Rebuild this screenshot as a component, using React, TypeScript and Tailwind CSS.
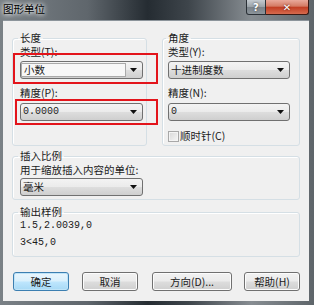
import React from "react";

const comboBg =
    "bg-[linear-gradient(#f3f3f3,#ebebeb_48%,#dddddd_52%,#cfcfcf)]";

function Arrow() {
    return (
        <svg className="ml-auto mr-[5px] shrink-0" width="7" height="4" viewBox="0 0 7 4">
            <path d="M0 0h7L3.5 4z" fill="#111" />
        </svg>
    );
}

interface ComboProps {
    value: string;
    width: string;
    mono?: boolean;
    focused?: boolean;
}

function Combo({ value, width, mono, focused }: ComboProps) {
    return (
        <div className={`${width} ${comboBg} h-[18px] rounded-[3px] border border-[#707070] flex items-center`}>
            {focused ? (
                <span className="h-[14px] w-[105px] border border-[#a9a9a9] bg-[#f7f7f7] flex items-center pl-[2px] leading-none">
                    {value}
                </span>
            ) : (
                <span className={`pl-[2px] leading-none ${mono ? "font-['Liberation_Mono',monospace] text-[10px]" : ""}`}>
                    {value}
                </span>
            )}
            <Arrow />
        </div>
    );
}

function Button({ label, width, primary }: { label: string; width: string; primary?: boolean }) {
    return (
        <div
            className={`${width} h-[19px] rounded-[3px] border flex items-center justify-center text-[10.5px] ${
                primary
                    ? "border-[#3c7fb1] bg-[linear-gradient(#eaf6fd,#d9f0fc_48%,#bee6fd_52%,#a7d9f5)] shadow-[inset_0_0_0_1px_#bfe4f8]"
                    : "border-[#707070] bg-[linear-gradient(#f2f2f2,#ebebeb_48%,#dddddd_52%,#cfcfcf)] shadow-[inset_0_0_0_1px_#fcfcfc]"
            }`}
        >
            {label}
        </div>
    );
}

export default function App() {
    return (
        <div className="w-[314px] h-[305px] flex flex-col bg-[linear-gradient(to_right,#7a8186,#5f666c_28%,#252c32_47%,#3e454b_60%,#878d92_80%,#5e656a)] font-['Noto_Sans_CJK_SC',sans-serif] text-[#1b1b1b] overflow-hidden">
            {/* title bar */}
            <div className="h-[20px] flex items-start shrink-0">
                <span className="ml-[3px] mt-[2px] text-[10.5px] leading-[14px] text-black [text-shadow:0_0_4px_#fff,0_0_6px_#fff]">
                    图形单位
                </span>
                <div className="ml-auto mr-[5px] flex">
                    <div className="w-[20px] h-[15px] border border-t-0 border-[#2a3036] rounded-bl-[3px] bg-[linear-gradient(#c4cacf,#9aa2a8_50%,#7a8289_51%,#8c949a)] flex items-center justify-center text-white text-[10px] font-bold font-['DejaVu_Sans',sans-serif] [text-shadow:0_0_2px_#333]">
                        ?
                    </div>
                    <div className="w-[43px] h-[15px] border border-t-0 border-l-0 border-[#3b1a14] rounded-br-[3px] bg-[linear-gradient(#e9a99b,#d47a63_45%,#c13d22_50%,#d66a4e)] flex items-center justify-center text-white text-[10px] font-bold font-['DejaVu_Sans',sans-serif] [text-shadow:0_0_2px_#4a0f05]">
                        ✕
                    </div>
                </div>
            </div>

            {/* client area */}
            <div className="flex-1 ml-[3px] mr-[5px] mb-[4px] bg-[#f0f0f0] border-t border-[#8c949b] flex flex-col px-[9px] pt-[10px] text-[10.5px]">
                <div className="flex gap-[15px]">
                    <fieldset className="w-[135px] border border-[#d5dfe5] rounded-[3px] pl-[7px] shadow-[inset_1px_1px_0_#fff]">
                        <legend className="-ml-[2px] px-[2px] leading-[14px]">长度</legend>
                        <div className="leading-[14px]">类型(T):</div>
                        <div className="relative mt-[2px] z-10">
                            <Combo value="小数" width="w-[123px]" focused />
                            <div className="absolute -left-[7px] -top-[8px] -right-[12px] -bottom-[5px] border-2 border-[#e3141b] pointer-events-none" />
                        </div>
                        <div className="mt-[7px] leading-[14px]">精度(P):</div>
                        <div className="relative mt-[3px] z-10">
                            <Combo value="0.0000" width="w-[123px]" mono />
                            <div className="absolute -left-[5px] -top-[4px] -right-[12px] -bottom-[4px] border-2 border-[#e3141b] pointer-events-none" />
                        </div>
                    </fieldset>

                    <fieldset className="w-[138px] border border-[#d5dfe5] rounded-[3px] pl-[5px] pb-[2px] shadow-[inset_1px_1px_0_#fff]">
                        <legend className="-ml-[2px] px-[2px] leading-[14px]">角度</legend>
                        <div className="leading-[14px]">类型(Y):</div>
                        <div className="mt-[2px]">
                            <Combo value="十进制度数" width="w-[122px]" />
                        </div>
                        <div className="mt-[7px] leading-[14px]">精度(N):</div>
                        <div className="mt-[3px]">
                            <Combo value="0" width="w-[122px]" mono />
                        </div>
                        <div className="mt-[9px] h-[13px] flex items-center">
                            <span className="w-[11px] h-[11px] border border-[#a8a8a8] bg-[linear-gradient(135deg,#d8d8d8,#f6f6f6)] shadow-[inset_0_0_0_1px_#f4f4f4]" />
                            <span className="ml-[1px] leading-none">顺时针(C)</span>
                        </div>
                    </fieldset>
                </div>

                <fieldset className="mt-[3px] border border-[#d5dfe5] rounded-[3px] pl-[7px] pb-[3px] shadow-[inset_1px_1px_0_#fff]">
                    <legend className="-ml-[2px] px-[2px] leading-[14px]">插入比例</legend>
                    <div className="leading-[14px]">用于缩放插入内容的单位:</div>
                    <div className="mt-[1px]">
                        <Combo value="毫米" width="w-[123px]" />
                    </div>
                </fieldset>

                <fieldset className="mt-[5px] border border-[#d5dfe5] rounded-[3px] pl-[7px] pb-[6px] shadow-[inset_1px_1px_0_#fff]">
                    <legend className="-ml-[2px] px-[2px] leading-[14px]">输出样例</legend>
                    <div className="leading-[14px] font-['Liberation_Mono',monospace] text-[10px]">1.5,2.0039,0</div>
                    <div className="mt-[3px] leading-[14px] font-['Liberation_Mono',monospace] text-[10px]">3&lt;45,0</div>
                </fieldset>

                <div className="mt-[15px] ml-[1px] flex">
                    <Button label="确定" width="w-[56px]" primary />
                    <div className="ml-[13px]">
                        <Button label="取消" width="w-[56px]" />
                    </div>
                    <div className="ml-[14px]">
                        <Button label="方向(D)..." width="w-[80px]" />
                    </div>
                    <div className="ml-[12px]">
                        <Button label="帮助(H)" width="w-[56px]" />
                    </div>
                </div>
            </div>
        </div>
    );
}
